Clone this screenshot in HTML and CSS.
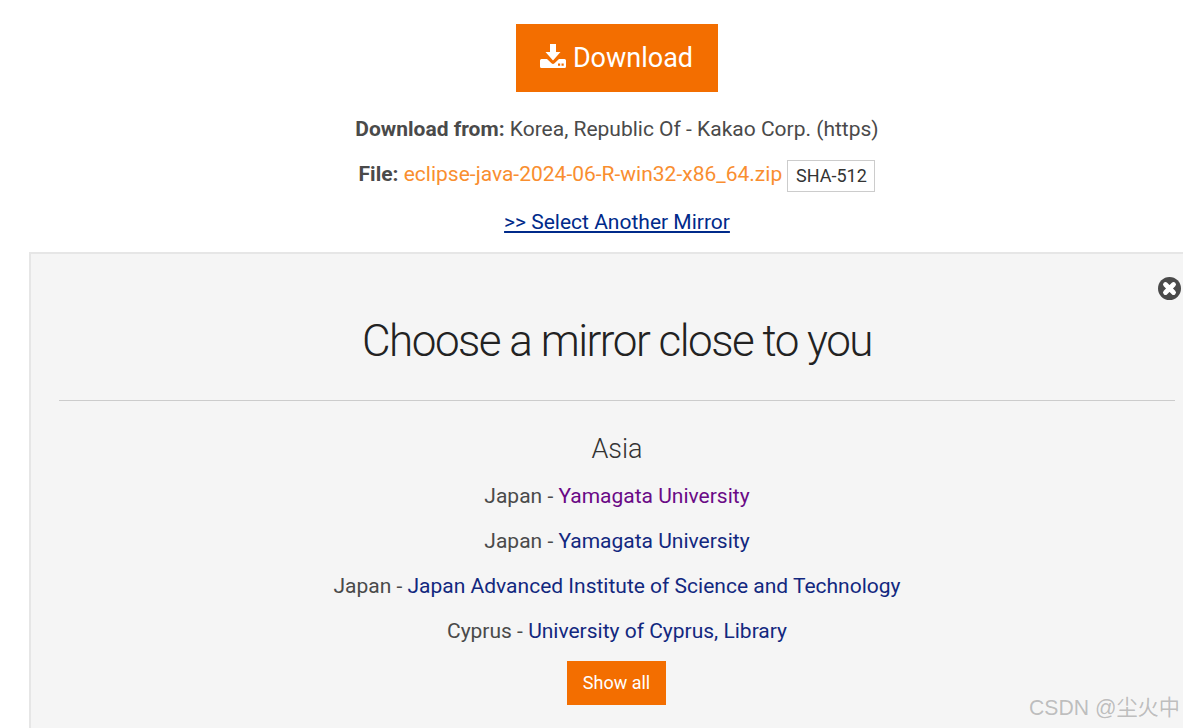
FILE: index.html
```html
<!DOCTYPE html>
<html lang="en">
<head>
<meta charset="utf-8">
<title>Download</title>
<link rel="stylesheet" href="styles.css">
</head>
<body>
<main class="page">
  <a class="btn-download" href="#">
    <svg class="icon-dl" viewBox="0 0 26 24" aria-hidden="true">
      <path d="M10 0h6v8h4.500L13 16.500 5.500 8H10z"/>
      <path fill-rule="evenodd" d="M0 16.500q0-1.500 1.500-1.500H7l4.500 4.200q1.500 1.400 3 0L19 15h5.500q1.500 0 1.500 1.500V22.500q0 1.500-1.500 1.500h-23Q0 24 0 22.500zM18 19.500h2.200v2.200H18zM21.500 19.500h2.200v2.200h-2.200z"/>
    </svg>
    Download
  </a>
  <p class="line line-from"><strong>Download from:</strong> Korea, Republic Of - Kakao Corp. (https)</p>
  <p class="line line-file"><strong>File:</strong> <a class="file-link" href="#">eclipse-java-2024-06-R-win32-x86_64.zip</a> <span class="sha">SHA-512</span></p>
  <p class="line line-mirror"><a class="mirror-link" href="#">&gt;&gt; Select Another Mirror</a></p>

  <section class="panel">
    <svg class="close" viewBox="0 0 24 24" aria-hidden="true">
      <circle cx="12" cy="12" r="12" fill="#4a4a4a"/>
      <path d="M7.800 7.800 16.200 16.200M16.200 7.800 7.800 16.200" stroke="#fff" stroke-width="5" stroke-linecap="round"/>
    </svg>
    <h1 class="title">Choose a mirror close to you</h1>
    <hr class="rule">
    <h2 class="region">Asia</h2>
    <p class="mirror">Japan - <a class="visited" href="#">Yamagata University</a></p>
    <p class="mirror">Japan - <a href="#">Yamagata University</a></p>
    <p class="mirror">Japan - <a href="#">Japan Advanced Institute of Science and Technology</a></p>
    <p class="mirror">Cyprus - <a href="#">University of Cyprus, Library</a></p>
    <a class="btn-show" href="#">Show all</a>
  </section>
</main>
<div class="watermark">CSDN @尘火中</div>
</body>
</html>
```
FILE: styles.css
```css
html, body {
  margin: 0;
  padding: 0;
  height: 728px;
  overflow: hidden;
  background: #fff;
}
body {
  font-family: Roboto, "Liberation Sans", sans-serif;
  font-size: 21px;
  line-height: 30px;
  color: #4a4a4a;
  position: relative;
}
.page {
  width: 1176px;
  margin-left: 29px;
  padding-top: 24px;
  text-align: center;
}
.btn-download {
  display: inline-flex;
  align-items: center;
  justify-content: center;
  width: 202px;
  height: 68px;
  background: #f36e00;
  color: #fff;
  font-size: 27px;
  text-decoration: none;
}
.icon-dl {
  width: 26px;
  height: 24px;
  fill: #fff;
  margin-left: -1px;
  margin-right: 7px;
  margin-top: -5px;
}
.line {
  margin: 0;
}
.line-from { margin-top: 22px; }
.line-file { margin-top: 15px; }
.line-mirror { margin-top: 15px; }
.file-link {
  color: #f98e2f;
  text-decoration: none;
}
.sha {
  display: inline-block;
  box-sizing: border-box;
  width: 88px;
  height: 32px;
  margin-top: 1px;
  line-height: 30px;
  border: 1px solid #ccc;
  font-size: 18px;
  color: #333;
  vertical-align: top;
}
.mirror-link {
  color: #002a8a;
  text-decoration: underline;
}
.panel {
  position: relative;
  box-sizing: border-box;
  height: 476px;
  margin-top: 15px;
  padding: 0 30px 0 28px;
  background: #f5f5f5;
  border: 1px solid #e6e6e6;
  border-width: 2px 0 0 2px;
}
.close {
  position: absolute;
  top: 23px;
  right: 24px;
  width: 23px;
  height: 23px;
}
.title {
  margin: 62px 0 0;
  font-size: 44px;
  line-height: 50px;
  font-weight: 300;
  letter-spacing: -1.500px;
  color: #222;
}
.rule {
  margin: 34px 0 0;
  border: 0;
  border-top: 1px solid #ccc;
}
.region {
  margin: 31px 0 0;
  font-size: 27px;
  line-height: 34px;
  font-weight: 300;
  color: #333;
}
.mirror {
  margin: 15px 0 0;
}
.mirror a {
  color: #12287f;
  text-decoration: none;
}
.mirror a.visited {
  color: #6a0a86;
}
.btn-show {
  display: inline-block;
  margin-top: 15px;
  margin-right: 1px;
  width: 99px;
  height: 44px;
  line-height: 44px;
  background: #f36e00;
  color: #fff;
  font-size: 18px;
  text-decoration: none;
}
.watermark {
  position: absolute;
  right: 3px;
  bottom: 7px;
  font-family: "Liberation Sans", "Noto Sans CJK SC", sans-serif;
  font-size: 21.200px;
  line-height: 26px;
  color: rgba(120, 120, 120, 0.45);
}
```
